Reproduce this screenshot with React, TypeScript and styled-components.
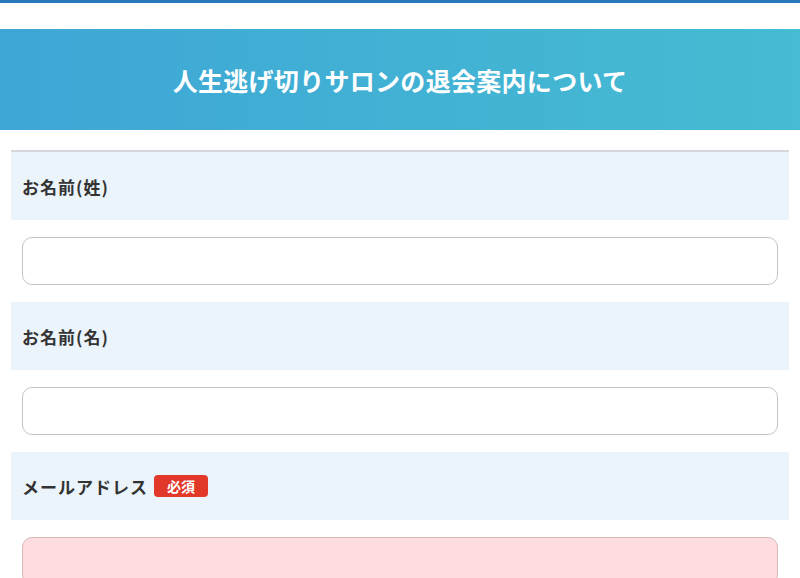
import React from "react";
import styled, { createGlobalStyle } from "styled-components";

const GlobalStyle = createGlobalStyle`
  body {
    margin: 0;
    background: #ffffff;
    font-family: "Noto Sans CJK JP", "Noto Sans", sans-serif;
    color: #333333;
  }
`;

type Field = { label: string; required?: boolean; error?: boolean };

const fields: Field[] = [
  { label: "お名前(姓)" },
  { label: "お名前(名)" },
  { label: "メールアドレス", required: true, error: true },
];

export default function App() {
  return (
    <Page>
      <GlobalStyle />
      <TopLine />
      <Hero>
        <Title>人生逃げ切りサロンの退会案内について</Title>
      </Hero>
      <Form>
        {fields.map((f, i) => (
          <Item key={f.label} $first={i === 0}>
            <LabelRow>
              <Label>{f.label}</Label>
              {f.required && <Badge>必須</Badge>}
            </LabelRow>
            <InputWrap>
              <Input type="text" $error={f.error} />
            </InputWrap>
          </Item>
        ))}
      </Form>
    </Page>
  );
}

const Page = styled.div`
  width: 100%;
  min-height: 578px;
  overflow: hidden;
`;

const TopLine = styled.div`
  height: 3px;
  background: #2a78bc;
  margin-bottom: 26px;
`;

const Hero = styled.header`
  height: 101px;
  display: flex;
  align-items: center;
  justify-content: center;
  background: linear-gradient(90deg, #3ea6d6 0%, #45bcd2 100%);
`;

const Title = styled.h1`
  margin: 0;
  color: #ffffff;
  font-size: 25px;
  font-weight: 700;
  letter-spacing: 0.3px;
`;

const Form = styled.div`
  margin: 20px 11px 0;
  display: flex;
  flex-direction: column;
`;

const Item = styled.div<{ $first?: boolean }>`
  border-top: ${(p) => (p.$first ? "2px solid #d3d7db" : "none")};
`;

const LabelRow = styled.div`
  height: 68px;
  padding: 0 11px;
  display: flex;
  align-items: center;
  gap: 6px;
  background: #ebf3fb;
`;

const Label = styled.span`
  font-size: 17px;
  font-weight: 700;
  letter-spacing: 1px;
  color: #333333;
`;

const Badge = styled.span`
  display: inline-flex;
  align-items: center;
  justify-content: center;
  width: 54px;
  height: 22px;
  border-radius: 4px;
  background: #e2382a;
  color: #ffffff;
  font-size: 14px;
  font-weight: 700;
`;

const InputWrap = styled.div`
  padding: 17px 11px;
`;

const Input = styled.input<{ $error?: boolean }>`
  display: block;
  box-sizing: border-box;
  width: 100%;
  height: 48px;
  border-radius: 10px;
  border: 1px solid ${(p) => (p.$error ? "#d9b8b8" : "#c4c4c4")};
  background: ${(p) => (p.$error ? "#fddde0" : "#ffffff")};
  outline: none;
  font-size: 16px;
  padding: 0 12px;
`;
